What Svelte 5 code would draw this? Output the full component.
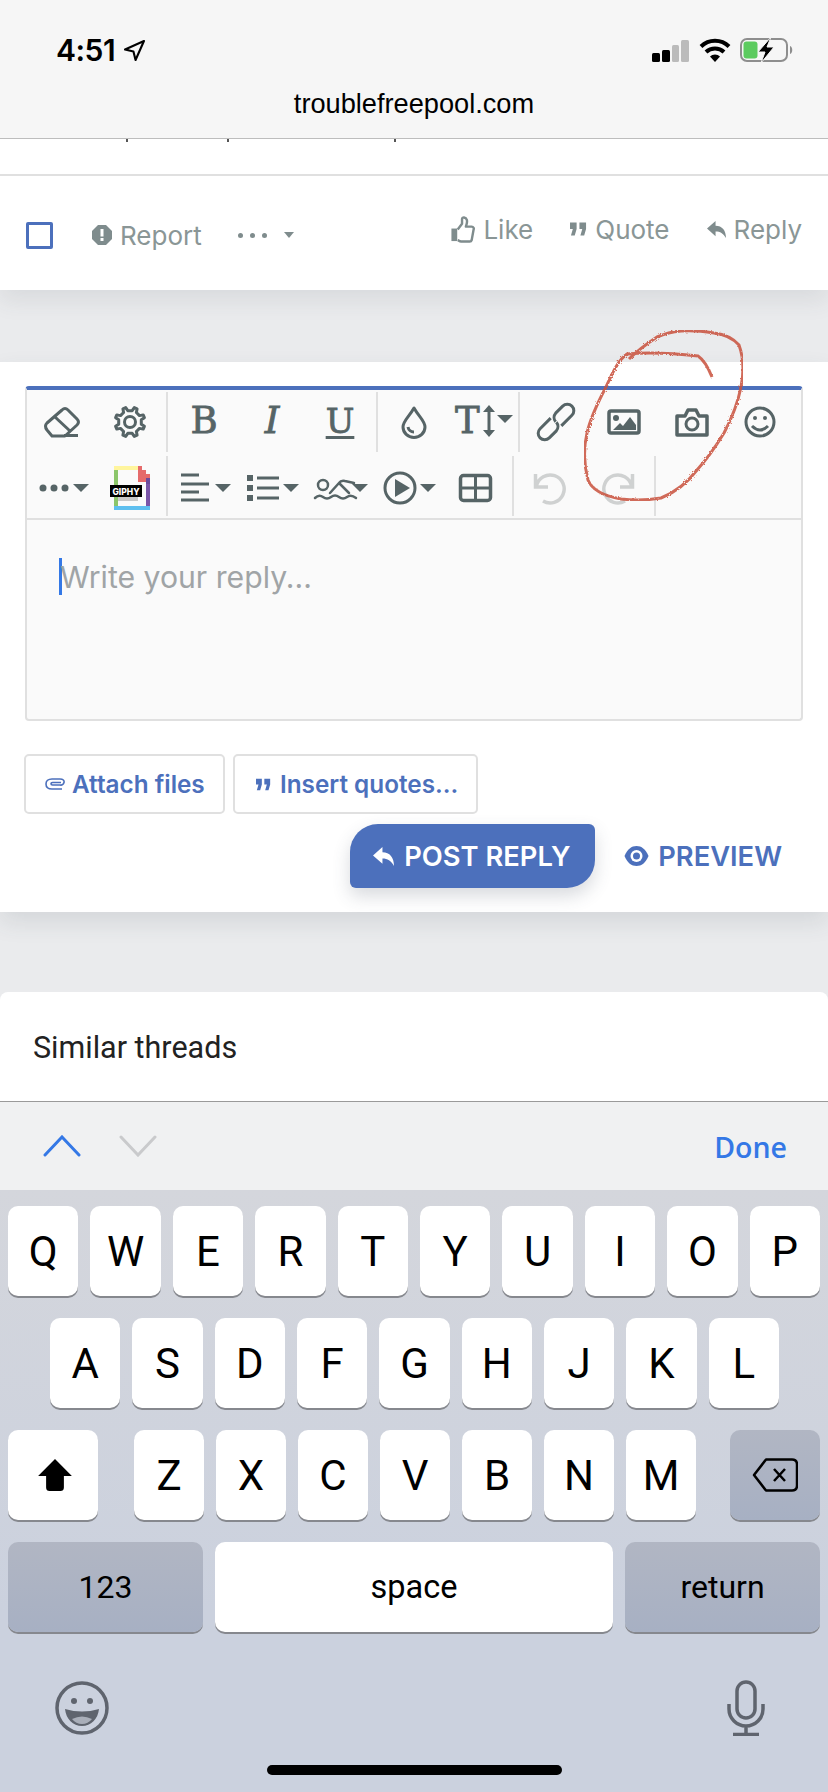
<script>
	const row1 = ['Q', 'W', 'E', 'R', 'T', 'Y', 'U', 'I', 'O', 'P'];
	const row2 = ['A', 'S', 'D', 'F', 'G', 'H', 'J', 'K', 'L'];
	const row3 = ['Z', 'X', 'C', 'V', 'B', 'N', 'M'];

	// 8 tooth gear outline around the middle of a 68x64 button
	function gearPath(cx, cy, outer, inner) {
		const pts = [];
		for (let i = 0; i < 8; i++) {
			const a = (i * Math.PI) / 4 - Math.PI / 8;
			for (const [d, r] of [[-0.2, inner], [-0.1, outer], [0.1, outer], [0.2, inner]]) {
				const t = a + d;
				pts.push(`${(cx + r * Math.cos(t)).toFixed(1)} ${(cy + r * Math.sin(t)).toFixed(1)}`);
			}
		}
		return 'M' + pts.join('L') + 'Z';
	}
</script>

{#snippet reply(cls)}
	<svg class={cls} viewBox="0 0 20 20"><path d="M0 9 9 1V6C16 6 20 11 20 19 17 14 14 12 9 12V17Z" /></svg>
{/snippet}

{#snippet quote(cls)}
	<svg class={cls} viewBox="0 0 18 14"><path d="M0 0H7V7L5 14H1L3 7H0ZM10 0H17V7L15 14H11L13 7H10Z" /></svg>
{/snippet}

{#snippet caret(x)}
	<path class="fill" d="M{x} 30h16l-8 8z" />
{/snippet}

<div class="screen">
	<header class="safari">
		<div class="status">
			<div class="time">
				<span>4:51</span>
				<svg class="loc" viewBox="0 0 20 20"><path d="M19 1 1 9l8 2 2 8z" /></svg>
			</div>
			<div class="indicators">
				<svg class="signal" viewBox="0 0 37 22">
					<rect x="0" y="13" width="8" height="9" rx="1.500" fill="#000" />
					<rect x="10" y="10" width="8" height="12" rx="1.500" fill="#000" />
					<rect x="20" y="5" width="7" height="17" rx="1.500" fill="#bbb" />
					<rect x="29" y="0" width="8" height="22" rx="1.500" fill="#bbb" />
				</svg>
				<svg class="wifi" viewBox="0 0 32 24">
					<path d="M2 8.500a20 20 0 0 1 28 0M7 14a13 13 0 0 1 18 0" fill="none" stroke="#000" stroke-width="4" />
					<path d="M11 18.500a7 7 0 0 1 10 0L16 24z" fill="#000" />
				</svg>
				<svg class="battery" viewBox="0 0 54 26">
					<rect x="1" y="2" width="46" height="22" rx="6" fill="none" stroke="#8e8e8e" stroke-width="2" />
					<rect x="3.500" y="4.500" width="14" height="17" rx="3" fill="#5ccb5f" />
					<path d="M50 9c3 1 3 7 0 8z" fill="#8e8e8e" />
					<path d="M31 0 18 15h7l-4 11 13-16h-7z" fill="#000" stroke="#f6f6f6" stroke-width="1" />
				</svg>
			</div>
		</div>
		<div class="url">troublefreepool.com</div>
	</header>

	<section class="post">
		<div class="cut-text"><i></i><i></i><i></i></div>
		<div class="actions">
			<div class="actions-left">
				<span class="check"></span>
				<svg class="report-icon" viewBox="0 0 20 20">
					<path d="M6 0h8l6 6v8l-6 6H6l-6-6V6z" />
					<rect x="8.500" y="4" width="3" height="7.500" fill="#fff" />
					<rect x="8.500" y="13" width="3" height="3" fill="#fff" />
				</svg>
				<span class="act">Report</span>
				<span class="more"><b></b><b></b><b></b></span>
				<span class="more-caret"></span>
			</div>
			<div class="actions-right">
				<span class="act-item">
					<svg class="thumb" viewBox="0 0 24 28">
						<path class="cuff" d="M0 13h6v13H0z" />
						<path d="M6.500 14 11 8V3c0-2 4-2 5 1 .7 3-.5 5-1 7h6c2 0 2.500 2 2 3l-2 11c-.3 1-1 1.500-2 1.500H10c-2 0-2-1-3.500-1.500" />
					</svg>
					<span class="act">Like</span>
				</span>
				<span class="act-item">
					{@render quote('quote-grey')}
					<span class="act">Quote</span>
				</span>
				<span class="act-item">
					{@render reply('reply-grey')}
					<span class="act">Reply</span>
				</span>
			</div>
		</div>
	</section>

	<section class="reply-card">
		<div class="editor">
			<div class="toolbar">
				<div class="tb-row">
					<svg class="tb" viewBox="0 0 68 62">
						<path class="line" d="M24 46 19 40Q16 36 19 33L34 20Q37 17 40 20L49 29Q52 32 49 35L37 46ZM27 27 42 41M36 45.500H50" />
					</svg>
					<svg class="tb" viewBox="0 0 68 62">
						<path class="line" d={gearPath(34, 32, 15, 11.5)} />
						<circle class="line" cx="34" cy="32" r="5.500" />
					</svg>
					<span class="sep"></span>
					<span class="tb glyph">B</span>
					<span class="tb glyph italic">I</span>
					<span class="tb glyph under">U</span>
					<span class="sep"></span>
					<svg class="tb" viewBox="0 0 68 62">
						<path class="line" d="M34 18C29 27 23 31 23 37A11 10.500 0 0 0 45 37C45 31 39 27 34 18ZM28 37A6 6 0 0 0 34 42" />
					</svg>
					<span class="tb size-btn">
						<span class="glyph">T</span>
						<svg class="size-arrows" viewBox="0 0 34 32">
							<path class="line" d="M9 3V29" />
							<path class="fill" d="M9 0 15 7H3ZM9 32 15 25H3Z" />
							<path class="fill" d="M17 10H33L25 18Z" />
						</svg>
					</span>
					<span class="sep"></span>
					<svg class="tb" viewBox="0 0 68 62">
						<g transform="rotate(-45 34 32)">
							<path class="line" d="M33 25.500H18a6.500 6.500 0 0 0 0 13H28a6.500 6.500 0 0 0 6-6" />
							<path class="line" d="M35 38.500H50a6.500 6.500 0 0 0 0-13H40a6.500 6.500 0 0 0-6 6" />
						</g>
					</svg>
					<svg class="tb" viewBox="0 0 68 62">
						<rect class="line heavy" x="19" y="21" width="30" height="22" rx="2" />
						<circle class="fill" cx="26" cy="28" r="3" />
						<path class="fill" d="M23 40 30 33 33 36 40 27 46 35V40Z" />
					</svg>
					<svg class="tb" viewBox="0 0 68 62">
						<path class="line heavy" d="M19 26H27L30 20H38L41 26H49V45H19Z" />
						<circle class="line" cx="34" cy="34" r="6" />
					</svg>
					<svg class="tb" viewBox="0 0 68 62">
						<circle class="line" cx="34" cy="32" r="14" />
						<circle class="fill" cx="29" cy="28" r="2" />
						<circle class="fill" cx="39" cy="28" r="2" />
						<path class="line" d="M26 36Q34 44 42 36" />
					</svg>
				</div>
				<div class="tb-row">
					<svg class="tb" viewBox="0 0 68 64">
						<circle class="fill" cx="15" cy="34" r="3.500" />
						<circle class="fill" cx="26" cy="34" r="3.500" />
						<circle class="fill" cx="37" cy="34" r="3.500" />
						{@render caret(45)}
					</svg>
					<svg class="tb" viewBox="0 0 68 64">
						<path fill="#fff59d" d="M18 12H42V16H18Z" />
						<path fill="#e56b6b" d="M42 12H46V16H50V20H54V28H42Z" />
						<path fill="#6b4a9c" d="M50 24H54V30H50Z" />
						<path fill="#8cc66b" d="M18 16H22V52H18Z" />
						<path fill="#7a55a8" d="M50 30H54V52H50Z" />
						<path fill="#5ebfef" d="M18 52H54V56H18Z" />
						<rect x="22" y="43" width="20" height="4" fill="#c9c9c9" />
						<rect x="14" y="31" width="32" height="12" fill="#000" />
						<text x="30" y="40.500" class="giphy">GIPHY</text>
					</svg>
					<span class="sep"></span>
					<svg class="tb" viewBox="0 0 68 64">
						<path class="line" d="M11 21H29M11 30H39M11 38H29M11 46H39" />
						{@render caret(45)}
					</svg>
					<svg class="tb" viewBox="0 0 68 64">
						<path class="fill" d="M9 21h6v6H9zM9 31h6v6H9zM9 41h6v6H9z" />
						<path class="line" d="M19 24H41M19 34H41M19 44H41" />
						{@render caret(45)}
					</svg>
					<svg class="tb" viewBox="0 0 68 64">
						<circle class="thin" cx="17" cy="31" r="5" />
						<path class="thin" d="M24 39 33 29Q35 26 39 27L48 29M33 29 43 39" />
						<path class="thin" d="M9 44Q13 40 17 43T25 43T33 43T41 43T50 44" />
						{@render caret(46)}
					</svg>
					<svg class="tb" viewBox="0 0 68 64">
						<circle class="line" cx="26" cy="34" r="15" />
						<path class="fill" d="M21 25V43L36 34Z" />
						{@render caret(46)}
					</svg>
					<svg class="tb" viewBox="0 0 68 64">
						<rect class="line heavy" x="18.500" y="21.500" width="30" height="25" rx="3" />
						<path class="line" d="M33.500 21.500V46.500M18.500 34H48.500" />
					</svg>
					<span class="sep"></span>
					<svg class="tb" viewBox="0 0 68 64">
						<path class="off" d="M19.500 20V33H32M20.500 32A14 14 0 1 1 27 47" />
					</svg>
					<svg class="tb" viewBox="0 0 68 64">
						<path class="off" d="M48.500 20V33H36M47.500 32A14 14 0 1 0 41 47" />
					</svg>
					<span class="sep"></span>
				</div>
			</div>
			<div class="textarea">
				<span class="caret-bar"></span>
				<span class="placeholder">Write your reply...</span>
			</div>
		</div>

		<div class="attach-row">
			<button class="ghost">
				<svg class="clip" viewBox="0 0 20 12">
					<path d="M17 11H7C3 11 1 9 1 6S3 1 7 1H15C18 1 19.500 2.500 19 4.500S17 7.500 15 7H7.500C5.500 7 5.500 4.500 7.500 4.500H16" />
				</svg>
				Attach files
			</button>
			<button class="ghost ghost-quotes">
				{@render quote('quote-blue')}
				Insert quotes...
			</button>
		</div>

		<div class="submit-row">
			<button class="post-btn">
				{@render reply('reply-white')}
				POST REPLY
			</button>
			<button class="preview">
				<svg class="eye" viewBox="0 0 24 20">
					<path d="M0 10C3 3 7 0 12 0S21 3 24 10C21 17 17 20 12 20S3 17 0 10Z" />
					<circle cx="12" cy="10" r="6" fill="#fff" />
					<circle cx="12" cy="10" r="3.500" />
				</svg>
				PREVIEW
			</button>
		</div>
	</section>

	<section class="similar">Similar threads</section>

	<div class="accessory">
		<div class="arrows">
			<svg class="chev" viewBox="0 0 38 22"><path d="M2 20 19 2 36 20" stroke="#3478e6" /></svg>
			<svg class="chev" viewBox="0 0 38 22"><path d="M2 2 19 20 36 2" stroke="#c9cacc" /></svg>
		</div>
		<span class="done">Done</span>
	</div>

	<div class="keyboard">
		<div class="kb-row">
			{#each row1 as k}<span class="key">{k}</span>{/each}
		</div>
		<div class="kb-row kb-row2">
			{#each row2 as k}<span class="key">{k}</span>{/each}
		</div>
		<div class="kb-row">
			<span class="key shift">
				<svg viewBox="0 0 38 36"><path d="M19 0 38 19H29V32Q29 36 25 36H13Q9 36 9 32V19H0Z" /></svg>
			</span>
			{#each row3 as k}<span class="key">{k}</span>{/each}
			<span class="key dark del">
				<svg viewBox="0 0 46 34">
					<path d="M14 1.500H40Q45 1.500 45 6.500V27.500Q45 32.500 40 32.500H14L2 17Z" fill="none" stroke="#000" stroke-width="2.500" stroke-linejoin="round" />
					<path d="M22 11 33 23M33 11 22 23" stroke="#000" stroke-width="2.500" />
				</svg>
			</span>
		</div>
		<div class="kb-row">
			<span class="key dark wide">123</span>
			<span class="key space">space</span>
			<span class="key dark wide">return</span>
		</div>
		<div class="kb-bottom">
			<svg class="kb-emoji" viewBox="0 0 54 54">
				<circle cx="27" cy="27" r="25" fill="none" stroke="#5f646e" stroke-width="3.500" />
				<circle cx="19" cy="20" r="3" fill="#5f646e" />
				<circle cx="35" cy="20" r="3" fill="#5f646e" />
				<path d="M10 28Q27 33 44 28C43 38 36 45 27 45S11 38 10 28Z" fill="#5f646e" />
				<path d="M17 38Q27 33 37 38 33 43 27 43T17 38Z" fill="#a9aeb9" />
			</svg>
			<svg class="kb-mic" viewBox="0 0 38 56" fill="none" stroke="#5f646e" stroke-width="3.500">
				<rect x="10" y="2" width="18" height="36" rx="9" />
				<path d="M2 24V29A17 17 0 0 0 36 29V24M19 46V54M6 54.500H32" />
			</svg>
		</div>
		<div class="home-bar"></div>
	</div>

	<svg class="scribble" viewBox="0 0 828 1792">
		<defs>
			<filter id="pencil" x="0" y="0" width="100%" height="100%">
				<feTurbulence type="fractalNoise" baseFrequency="0.7" numOctaves="2" seed="4" />
				<feDisplacementMap in="SourceGraphic" scale="3" />
			</filter>
		</defs>
		<path filter="url(#pencil)" d="M712 377C708 367 704 360 698 356 680 354 650 352 627 354 618 360 612 374 606 387 597 404 590 420 587 433 583 450 584 465 588 480 592 490 604 496 621 499 636 501 650 500 661 498 676 492 688 482 697 470 708 458 716 446 724 433 732 418 738 402 741 387 744 372 743 356 739 345 732 337 722 334 714 333 702 331 692 330 681 331 670 332 664 334 657 337 648 343 638 350 629 359" />
	</svg>
</div>

<style>
	:global(body) {
		margin: 0;
		background: #eaebed;
	}

	.screen {
		position: relative;
		width: 828px;
		height: 1792px;
		overflow: hidden;
		background: #eaebed;
		font-family: Inter, 'Liberation Sans', sans-serif;
	}

	/* --- Safari chrome --- */
	.safari {
		height: 138px;
		background: #f6f6f6;
		border-bottom: 1px solid #bdbdbd;
		box-sizing: content-box;
		position: relative;
		z-index: 2;
	}
	.status {
		display: flex;
		justify-content: space-between;
		align-items: center;
		height: 50px;
		padding: 25px 34px 0 56px;
	}
	.time {
		display: flex;
		align-items: center;
		gap: 9px;
		font-size: 30px;
		font-weight: 600;
		color: #000;
		letter-spacing: -0.5px;
	}
	.loc {
		width: 21px;
		height: 21px;
		fill: none;
		stroke: #000;
		stroke-width: 2;
		stroke-linejoin: round;
	}
	.indicators {
		display: flex;
		align-items: center;
	}
	.signal {
		width: 37px;
		height: 22px;
		margin-top: 2px;
	}
	.wifi {
		width: 32px;
		height: 24px;
		margin-left: 10px;
	}
	.battery {
		width: 54px;
		height: 26px;
		margin-left: 9px;
	}
	.url {
		text-align: center;
		font-family: 'Liberation Sans', sans-serif;
		font-size: 27.200px;
		color: #000;
		margin-top: 13px;
	}

	/* --- Post footer --- */
	.post {
		background: #fff;
		height: 151px;
		box-shadow: 0 10px 22px rgba(60, 70, 80, 0.1);
		position: relative;
	}
	.cut-text {
		display: flex;
		height: 35px;
		border-bottom: 2px solid #e0e0e0;
		box-sizing: content-box;
		padding-left: 126px;
	}
	.cut-text i {
		width: 2px;
		height: 3px;
		background: #555;
		margin-right: 99px;
	}
	.cut-text i:nth-child(2) {
		margin-right: 165px;
	}
	.actions {
		display: flex;
		justify-content: space-between;
		padding: 0 26px 0 26px;
		height: 114px;
	}
	.actions-left,
	.actions-right {
		display: flex;
		align-items: center;
		color: #7f8c8d;
	}
	.actions-left {
		margin-top: 4px;
	}
	.actions-right {
		margin-bottom: 8px;
	}
	.act {
		font-size: 26px;
		color: #8a9696;
	}
	.check {
		width: 21px;
		height: 21px;
		border: 3px solid #4c70bc;
		border-radius: 2px;
	}
	.report-icon {
		width: 20px;
		height: 20px;
		margin: 0 8px 0 39px;
		fill: #7f8c8d;
	}
	.more {
		display: flex;
		gap: 7px;
		margin-left: 36px;
	}
	.more b {
		width: 5px;
		height: 5px;
		border-radius: 50%;
		background: #7f8c8d;
	}
	.more-caret {
		margin-left: 17px;
		border: 5.500px solid transparent;
		border-top: 6px solid #7f8c8d;
		border-bottom: 0;
	}
	.act-item {
		display: flex;
		align-items: center;
		gap: 8px;
		margin-left: 37px;
	}
	.thumb {
		width: 24px;
		height: 27px;
		fill: none;
		stroke: #7f8c8d;
		stroke-width: 2.500;
		stroke-linejoin: round;
	}
	.cuff {
		fill: #7f8c8d;
		stroke: none;
	}
	.quote-grey {
		width: 17px;
		height: 14px;
		fill: #7f8c8d;
	}
	.reply-grey {
		width: 19px;
		height: 19px;
		fill: #7f8c8d;
	}

	/* --- Reply card --- */
	.reply-card {
		margin-top: 72px;
		height: 550px;
		background: #fff;
		box-shadow: 0 10px 22px rgba(60, 70, 80, 0.12);
		position: relative;
		padding: 24px 25px 0;
		box-sizing: border-box;
	}
	.editor {
		border: 2px solid #e0e0e0;
		border-top: 4px solid #4c70bc;
		border-radius: 4px;
		background: #fafafa;
		height: 335px;
		box-sizing: border-box;
	}
	.toolbar {
		border-bottom: 2px solid #e0e0e0;
		padding-left: 1px;
		height: 128px;
		box-sizing: content-box;
		display: flex;
		flex-direction: column;
	}
	.tb-row {
		display: flex;
		height: 64px;
	}
	.tb-row:first-child {
		height: 62px;
	}
	.tb-row:last-child {
		padding-top: 2px;
	}
	.tb {
		width: 68px;
		height: 100%;
		flex: none;
		display: block;
	}
	.sep {
		flex: none;
		width: 2px;
		margin: 2px 2px 0;
		height: 60px;
		background: #e0e0e0;
	}
	.line,
	.thin {
		fill: none;
		stroke: #566466;
		stroke-width: 3;
		stroke-linejoin: round;
	}
	.heavy {
		stroke-width: 3.500;
	}
	.thin {
		stroke-width: 2.500;
		stroke-linecap: round;
	}
	.fill {
		fill: #566466;
	}
	.off {
		fill: none;
		stroke: #cfd1d1;
		stroke-width: 3.500;
	}
	.glyph {
		font-family: 'DejaVu Serif', serif;
		font-size: 37px;
		line-height: 62px;
		text-align: center;
		color: #566466;
		-webkit-text-stroke: 0.8px #566466;
	}
	.italic {
		font-style: italic;
	}
	.under {
		text-decoration: underline;
		text-decoration-thickness: 3px;
		text-underline-offset: 3px;
		font-size: 34px;
	}
	.size-btn {
		display: flex;
		align-items: center;
		padding-left: 7px;
		box-sizing: border-box;
	}
	.size-arrows {
		width: 34px;
		height: 32px;
	}
	.giphy {
		font-family: Inter, sans-serif;
		font-size: 8.500px;
		font-weight: 800;
		fill: #fff;
		text-anchor: middle;
	}
	.textarea {
		display: flex;
		align-items: flex-start;
		padding: 39px 0 0 32px;
	}
	.caret-bar {
		width: 3px;
		height: 37px;
		margin-top: -1px;
		background: #3478e6;
	}
	.placeholder {
		font-size: 30.200px;
		line-height: 36px;
		color: #a0a4a6;
		margin-left: -2px;
	}

	.attach-row {
		display: flex;
		gap: 8px;
		margin: 33px 0 0 -1px;
	}
	.ghost {
		display: flex;
		align-items: center;
		gap: 7px;
		width: 201px;
		height: 60px;
		padding: 0 0 0 19px;
		background: #fff;
		border: 2px solid #e0e0e0;
		border-radius: 5px;
		box-sizing: border-box;
		font: 600 24.300px Inter, sans-serif;
		color: #4c70bc;
	}
	.ghost-quotes {
		width: 245px;
		padding-left: 21px;
		gap: 9px;
	}
	.clip {
		width: 20px;
		height: 12px;
		fill: none;
		stroke: #4c70bc;
		stroke-width: 1.600;
	}
	.quote-blue {
		width: 15px;
		height: 13px;
		fill: #4c70bc;
	}
	.submit-row {
		display: flex;
		justify-content: flex-end;
		align-items: center;
		margin: 10px 21px 0 0;
		gap: 29px;
	}
	.post-btn {
		display: flex;
		align-items: center;
		gap: 10px;
		width: 245px;
		height: 64px;
		padding: 0 0 0 23px;
		box-sizing: border-box;
		background: #4c70bc;
		border: 0;
		border-radius: 28px 6px 28px 6px;
		box-shadow: 0 8px 18px rgba(60, 70, 90, 0.2);
		font: 600 27.300px Inter, sans-serif;
		color: #fff;
		white-space: nowrap;
	}
	.reply-white {
		width: 21px;
		height: 21px;
		fill: #fff;
	}
	.preview {
		display: flex;
		align-items: center;
		gap: 9px;
		padding: 0;
		background: none;
		border: 0;
		font: 600 27.300px Inter, sans-serif;
		color: #4c70bc;
	}
	.eye {
		width: 25px;
		height: 20px;
		fill: #4c70bc;
	}

	/* --- Similar threads --- */
	.similar {
		margin-top: 80px;
		height: 110px;
		box-sizing: border-box;
		padding: 40px 0 0 33px;
		background: #fff;
		border-radius: 8px 8px 0 0;
		border-bottom: 1px solid #9a9a9a;
		font-family: Roboto, sans-serif;
		font-size: 30.500px;
		line-height: 32px;
		color: #222;
		position: relative;
	}

	/* --- Keyboard --- */
	.accessory {
		height: 88px;
		background: #f0f1f2;
		display: flex;
		justify-content: space-between;
		align-items: center;
		padding: 0 41px 0 43px;
	}
	.arrows {
		display: flex;
		gap: 38px;
	}
	.chev {
		width: 38px;
		height: 22px;
		fill: none;
		stroke-width: 3;
		stroke-linecap: round;
	}
	.done {
		font-family: 'Open Sans', sans-serif;
		font-size: 28.500px;
		font-weight: 600;
		color: #3478e6;
		margin-top: 2px;
	}
	.keyboard {
		height: 602px;
		background: linear-gradient(#d4d6dc, #cbd1de 70%);
		padding-top: 16px;
		box-sizing: border-box;
	}
	.kb-row {
		display: flex;
		gap: 12px;
		padding: 0 8px;
		height: 90px;
		margin-bottom: 22px;
	}
	.kb-row2 {
		padding: 0 49px 0 50px;
	}
	.key {
		flex: 1;
		display: flex;
		align-items: center;
		justify-content: center;
		background: #fff;
		border-radius: 10px;
		box-shadow: 0 2px 0 #86888e;
		font-family: Roboto, sans-serif;
		font-size: 42px;
		color: #000;
	}
	.shift {
		flex: none;
		width: 90px;
		margin-right: 24px;
	}
	.shift svg {
		width: 38px;
		height: 32px;
		margin-left: 3px;
	}
	.del {
		flex: none;
		width: 90px;
		margin-left: 22px;
	}
	.del svg {
		width: 46px;
		height: 34px;
	}
	.dark {
		background: linear-gradient(#b1b6c3, #a7b0c3);
	}
	.wide {
		flex: none;
		width: 195px;
		font-size: 32px;
	}
	.space {
		font-size: 32.500px;
	}
	.kb-bottom {
		display: flex;
		justify-content: space-between;
		padding: 0 63px 0 55px;
		align-items: center;
		height: 60px;
		margin-top: 46px;
	}
	.kb-emoji {
		width: 54px;
		height: 54px;
	}
	.kb-mic {
		width: 38px;
		height: 56px;
	}
	.home-bar {
		width: 295px;
		height: 10px;
		border-radius: 5px;
		background: #000;
		margin: 27px auto 0;
	}

	/* hand drawn circle on top of the screenshot */
	.scribble {
		position: absolute;
		inset: 0;
		width: 828px;
		height: 1792px;
		pointer-events: none;
		z-index: 3;
		fill: none;
		stroke: #c9513c;
		stroke-width: 3;
		opacity: 0.85;
	}
</style>
